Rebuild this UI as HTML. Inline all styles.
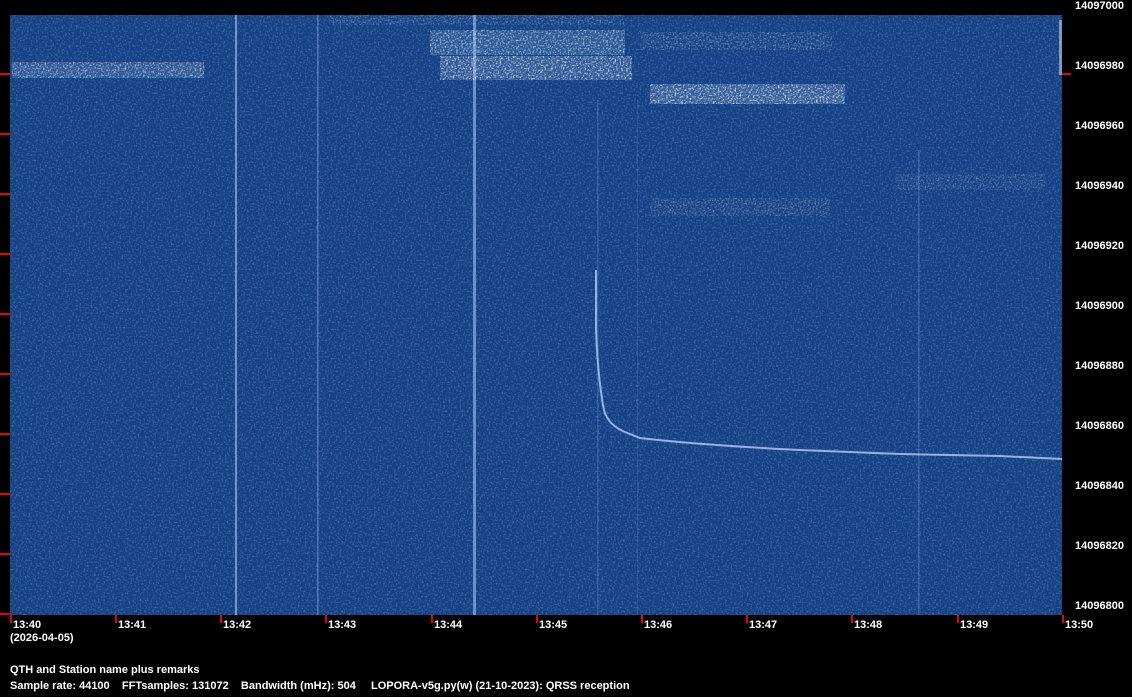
<!DOCTYPE html>
<html><head><style>
body{margin:0;background:#000;width:1132px;height:697px;overflow:hidden;position:relative;font-family:"Liberation Sans",sans-serif;font-weight:bold;font-size:11px;color:#fff}
.t{position:absolute;white-space:pre;line-height:12px}
</style></head><body>
<svg width="1132" height="697" style="position:absolute;left:0;top:0">
<defs>
<filter id="n" x="0" y="0" width="100%" height="100%">
<feTurbulence type="fractalNoise" baseFrequency="0.55" numOctaves="2" seed="3"/>
<feColorMatrix type="matrix" values="0 0 0 0 0.45  0 0 0 0 0.6  0 0 0 0 0.95  1.6 0 0 0 -0.75"/>
</filter>
<filter id="n2" x="0" y="0" width="100%" height="100%">
<feTurbulence type="fractalNoise" baseFrequency="0.6" numOctaves="1" seed="9"/>
<feColorMatrix type="matrix" values="0 0 0 0 0.85  0 0 0 0 0.92  0 0 0 0 1  3 0 0 0 -1.45"/>
</filter>
</defs>
<rect x="10" y="15" width="1052" height="600" fill="#134184"/>
<rect x="10" y="15" width="1052" height="600" filter="url(#n)" opacity="0.55"/>
<g fill="#9fc3ee">
<rect x="235" y="15" width="2" height="600" opacity="0.65"/>
<rect x="317" y="15" width="1.5" height="600" opacity="0.4"/>
<rect x="473" y="15" width="3" height="600" opacity="0.6"/>
<rect x="918" y="150" width="1.5" height="465" opacity="0.25"/>
<rect x="597" y="100" width="1.5" height="515" opacity="0.2"/>
<rect x="637" y="100" width="1" height="515" opacity="0.15"/>
</g>
<g>
<rect x="12" y="62" width="192" height="16" fill="#c8dcf8" opacity="0.12"/>
<rect x="12" y="62" width="192" height="16" filter="url(#n2)" opacity="0.8"/>
<rect x="330" y="15" width="294" height="10" filter="url(#n2)" opacity="0.4"/>
<rect x="430" y="30" width="195" height="25" fill="#c8dcf8" opacity="0.12"/>
<rect x="430" y="30" width="195" height="25" filter="url(#n2)" opacity="0.8"/>
<rect x="440" y="56" width="192" height="24" fill="#d8e8ff" opacity="0.12"/>
<rect x="440" y="56" width="192" height="24" filter="url(#n2)"/>
<rect x="640" y="32" width="192" height="18" filter="url(#n2)" opacity="0.45"/>
<rect x="650" y="84" width="195" height="20" fill="#d8e8ff" opacity="0.15"/>
<rect x="650" y="84" width="195" height="20" filter="url(#n2)"/>
<rect x="650" y="198" width="180" height="18" filter="url(#n2)" opacity="0.4"/>
<rect x="895" y="174" width="150" height="16" filter="url(#n2)" opacity="0.35"/>
<rect x="1059" y="20" width="3" height="55" fill="#e0ecff" opacity="0.5"/>
</g>
<path d="M596 270 L596 330 Q598 380 604 410 Q608 425 625 432 L640 438 Q700 445 800 450 L900 454 L1000 456 L1062 459" stroke="#b0d0f8" stroke-width="2" fill="none" opacity="0.8"/>
<g fill="#e00">
<rect x="0" y="73" width="10" height="2"/><rect x="0" y="133" width="10" height="2"/><rect x="0" y="193" width="10" height="2"/><rect x="0" y="253" width="10" height="2"/><rect x="0" y="313" width="10" height="2"/><rect x="0" y="373" width="10" height="2"/><rect x="0" y="433" width="10" height="2"/><rect x="0" y="493" width="10" height="2"/><rect x="0" y="553" width="10" height="2"/><rect x="0" y="613" width="10" height="2"/>
<rect x="1062" y="73" width="9" height="2"/>
<rect x="10" y="615" width="2" height="8"/><rect x="115" y="615" width="2" height="8"/><rect x="220" y="615" width="2" height="8"/><rect x="325" y="615" width="2" height="8"/><rect x="431" y="615" width="2" height="8"/><rect x="536" y="615" width="2" height="8"/><rect x="641" y="615" width="2" height="8"/><rect x="746" y="615" width="2" height="8"/><rect x="851" y="615" width="2" height="8"/><rect x="957" y="615" width="2" height="8"/><rect x="1062" y="615" width="2" height="8"/>
</g>
</svg>
<div class="t" style="left:1075px;top:0">14097000</div>
<div class="t" style="left:1075px;top:60px">14096980</div>
<div class="t" style="left:1075px;top:120px">14096960</div>
<div class="t" style="left:1075px;top:180px">14096940</div>
<div class="t" style="left:1075px;top:240px">14096920</div>
<div class="t" style="left:1075px;top:300px">14096900</div>
<div class="t" style="left:1075px;top:360px">14096880</div>
<div class="t" style="left:1075px;top:420px">14096860</div>
<div class="t" style="left:1075px;top:480px">14096840</div>
<div class="t" style="left:1075px;top:540px">14096820</div>
<div class="t" style="left:1075px;top:600px">14096800</div>
<div class="t" style="left:13px;top:619px">13:40</div>
<div class="t" style="left:118px;top:619px">13:41</div>
<div class="t" style="left:223px;top:619px">13:42</div>
<div class="t" style="left:328px;top:619px">13:43</div>
<div class="t" style="left:434px;top:619px">13:44</div>
<div class="t" style="left:539px;top:619px">13:45</div>
<div class="t" style="left:644px;top:619px">13:46</div>
<div class="t" style="left:749px;top:619px">13:47</div>
<div class="t" style="left:854px;top:619px">13:48</div>
<div class="t" style="left:960px;top:619px">13:49</div>
<div class="t" style="left:1065px;top:619px">13:50</div>
<div class="t" style="left:10px;top:632px">(2026-04-05)</div>
<div class="t" style="left:10px;top:664px">QTH and Station name plus remarks</div>
<div class="t" style="left:10px;top:680px">Sample rate: 44100    FFTsamples: 131072    Bandwidth (mHz): 504</div>
<div class="t" style="left:371px;top:680px">LOPORA-v5g.py(w) (21-10-2023): QRSS reception</div>
</body></html>
